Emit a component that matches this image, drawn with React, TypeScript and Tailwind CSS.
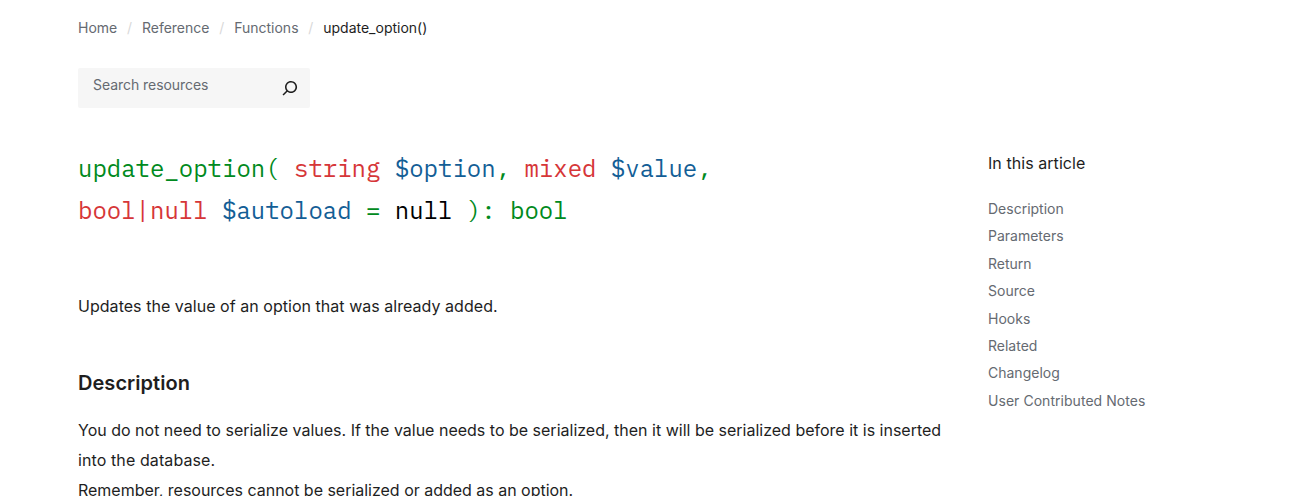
import React from "react";

const crumbs = ["Home", "Reference", "Functions"];
const toc = ["Description", "Parameters", "Return", "Source", "Hooks", "Related", "Changelog", "User Contributed Notes"];

export default function App() {
  return (
    <div className="h-[496px] overflow-hidden bg-white pl-[78px] font-['Inter',sans-serif] text-[#1e1e1e]">
      <nav className="flex pt-[18px] text-[14px] leading-5 text-[#656a71]">
        {crumbs.map((c) => (
          <React.Fragment key={c}>
            <a>{c}</a>
            <span className="w-[24.7px] text-center text-[#d9d9d9]">/</span>
          </React.Fragment>
        ))}
        <span className="text-[#1e1e1e]">update_option()</span>
      </nav>
      <form className="mt-[30px] flex h-10 w-[232px] justify-between rounded-[2px] bg-[#f6f6f6] pr-2 pl-[15px]">
        <span className="pt-[7px] text-[14px] leading-5 tracking-[-0.05px] text-[#656a71]">Search resources</span>
        <svg className="mt-2 h-6 w-6" viewBox="0 0 24 24" fill="#1e1e1e">
          <path d="M13 5c-3.3 0-6 2.7-6 6 0 1.4.5 2.7 1.3 3.7l-3.8 3.8 1.1 1.1 3.8-3.8c1 .8 2.3 1.3 3.7 1.3 3.3 0 6-2.7 6-6S16.300 5 13 5zm0 10.500c-2.500 0-4.500-2-4.500-4.500s2-4.500 4.500-4.500 4.500 2 4.500 4.500-2 4.500-4.500 4.500z" />
        </svg>
      </form>
      <div className="flex">
        <main className="w-[870px]">
          <h1 className="mt-[39px] font-['IBM_Plex_Mono','Liberation_Mono',monospace] text-[24px] leading-[42px] font-normal whitespace-pre text-[#008a20]">
            <span className="block">update_option( <span className="text-[#d63638]">string</span> <span className="text-[#135e96]">$option</span>, <span className="text-[#d63638]">mixed</span> <span className="text-[#135e96]">$value</span>,</span>
            <span className="block"><span className="text-[#d63638]">bool|null</span> <span className="text-[#135e96]">$autoload</span> = <span className="text-black">null</span> ): bool</span>
          </h1>
          <p className="mt-[60px] text-[16px] leading-[30px] tracking-[0.037px]">Updates the value of an option that was already added.</p>
          <h2 className="mt-[49px] text-[20px] leading-[26px] font-semibold tracking-[0.04px]">Description</h2>
          <p className="mt-[19px] text-[16px] leading-[30px]">
            You do not need to serialize values. If the value needs to be serialized, then it will be serialized before it is inserted
            <span className="block tracking-[0.1px]">into the database.</span>
            <span className="block tracking-[-0.016px]">Remember, resources cannot be serialized or added as an option.</span>
          </p>
        </main>
        <aside className="ml-[40px] pt-[43px]">
          <h2 className="text-[16px] leading-6 tracking-[0.06px]">In this article</h2>
          <ul className="mt-[20px] text-[14px] leading-[27.4px] text-[#656a71]">
            {toc.map((t) => <li key={t} className="last:tracking-[0.04px]">{t}</li>)}
          </ul>
        </aside>
      </div>
    </div>
  );
}
